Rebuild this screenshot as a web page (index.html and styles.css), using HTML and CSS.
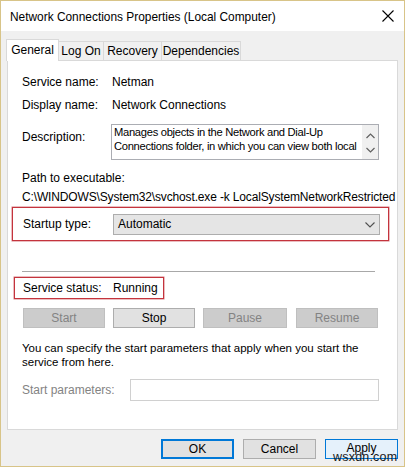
FILE: index.html
```html
<!DOCTYPE html>
<html>
<head>
<meta charset="utf-8">
<link rel="stylesheet" href="styles.css">
</head>
<body>
<div class="window">
  <div class="titlebar">
    <span class="title">Network Connections Properties (Local Computer)</span>
    <svg class="close" width="12" height="12" viewBox="0 0 12 12"><path d="M0.5 0.5 L11.5 11.5 M11.5 0.5 L0.5 11.5" stroke="#000" stroke-width="1.1" fill="none"/></svg>
  </div>
  <div class="client">
    <div class="tabs">
      <div class="tab active">General</div>
      <div class="tab t2">Log On</div>
      <div class="tab t3">Recovery</div>
      <div class="tab t4">Dependencies</div>
    </div>
    <div class="panel">
      <div class="row r1"><span class="lbl">Service name:</span><span>Netman</span></div>
      <div class="row r2"><span class="lbl">Display name:</span><span>Network Connections</span></div>
      <div class="desc">
        <span class="lbl dlbl">Description:</span>
        <div class="textbox">
          <div class="tbtext"><div class="tline">Manages objects in the Network and Dial-Up</div><div class="tline">Connections folder, in which you can view both local</div></div>
          <div class="scroll">
            <svg width="9" height="6" viewBox="0 0 9 6"><path d="M0.5 5 L4.5 1 L8.5 5" stroke="#606060" stroke-width="1.2" fill="none"/></svg>
            <svg width="9" height="6" viewBox="0 0 9 6"><path d="M0.5 1 L4.5 5 L8.5 1" stroke="#606060" stroke-width="1.2" fill="none"/></svg>
          </div>
        </div>
      </div>
      <div class="pathlbl">Path to executable:</div>
      <div class="path">C:\WINDOWS\System32\svchost.exe -k LocalSystemNetworkRestricted</div>
      <div class="redbox startup">
        <span class="lbl">Startup type:</span>
        <div class="combo"><span>Automatic</span>
          <svg width="10" height="6" viewBox="0 0 10 6"><path d="M0.5 0.5 L5 5 L9.5 0.5" stroke="#505050" stroke-width="1.1" fill="none"/></svg>
        </div>
      </div>
      <div class="sep"></div>
      <div class="redbox status"><span class="lbl">Service status:</span><span>Running</span></div>
      <div class="btnrow">
        <div class="btn dis">Start</div>
        <div class="btn">Stop</div>
        <div class="btn dis wide">Pause</div>
        <div class="btn dis">Resume</div>
      </div>
      <div class="info">You can specify the start parameters that apply when you start the service from here.</div>
      <div class="params"><span class="plbl">Start parameters:</span><div class="pinput"></div></div>
    </div>
    <div class="footer">
      <div class="fbtn ok">OK</div>
      <div class="fbtn">Cancel</div>
      <div class="fbtn apply"><span class="atext">Apply</span><span class="wm">wsxdn.com</span></div>
    </div>
  </div>
</div>
</body>
</html>
```
FILE: styles.css
```css
* { box-sizing: border-box; }
html, body { margin: 0; padding: 0; background: #ffffff; }
body { font-family: "Liberation Sans", Arial, sans-serif; font-size: 12px; color: #000; }
.window {
  width: 405px; height: 467px;
  border: 1px solid #d8c488;
  display: flex; flex-direction: column;
  background: #f0f0f0;
}
.titlebar {
  height: 30px; background: #fff; flex: none;
  display: flex; align-items: center; justify-content: space-between;
  padding: 0 9px 0 9px;
}
.title { font-size: 11.9px; position: relative; top: 1px; }
.close { margin-right: 1px; }
.client { flex: 1; display: flex; flex-direction: column; }
.tabs { display: flex; align-items: flex-end; padding-left: 5px; margin-top: 8px; height: 21px; flex: none; position: relative; z-index: 1; }
.tab {
  height: 19px; line-height: 18px; text-align: center; white-space: nowrap;
  border: 1px solid #d9d9d9; border-bottom: none; border-left: none;
  background: #f0f0f0; color: #000;
}
.tab.active {
  width: 53px; height: 22px; background: #fff; border-left: 1px solid #d9d9d9;
  line-height: 20px; margin-bottom: -1px;
}
.t2 { width: 45px; }
.t3 { width: 58px; }
.t4 { width: 79px; }
.panel {
  margin-left: 6px; width: 391px; height: 370px; flex: none;
  background: #fff; border: 1px solid #d9d9d9;
  padding: 0 0 0 14px;
  display: flex; flex-direction: column;
}
.row { display: flex; align-items: center; height: 15px; }
.lbl { width: 90px; flex: none; }
.r1 { margin-top: 13px; }
.r2 { margin-top: 8px; }
.desc { margin-top: 12px; height: 36px; display: flex; align-items: flex-start; }
.dlbl { padding-top: 6px; }
.textbox {
  width: 268px; height: 36px; margin-left: -1px;
  border: 1px solid #abadb3; background: #fff;
  display: flex;
}
.tbtext { flex: 1; min-width: 0; padding: 1px 0 0 2px; line-height: 13.5px; font-size: 11.2px; letter-spacing: -0.3px; }
.tline { white-space: nowrap; }
.scroll {
  width: 16px; flex: none; background: #f0f0f0; display: flex; flex-direction: column;
  align-items: center; justify-content: space-between; padding: 8px 0 6px;
}
.pathlbl { margin-top: 11px; line-height: 15px; }
.path { margin-top: 4px; line-height: 15px; white-space: nowrap; letter-spacing: -0.15px; }
.redbox { border: 1px solid #c4343d; box-shadow: 0 0 0 0.5px #d77a80; display: flex; align-items: center; flex: none; }
.startup {
  margin-top: 2px; margin-left: -10px; width: 377px; height: 34px; padding-left: 10px;
}
.combo {
  width: 267px; height: 21px; background: #e5e5e5; border: 1px solid #adadad;
  display: flex; align-items: center; justify-content: space-between; padding: 0 4px 0 4px;
}
.combo svg { margin-top: 1px; }
.sep { margin-top: 30px; height: 1px; background: #a8a8a8; width: 353px; flex: none; }
.status { margin-top: 5px; margin-left: -8px; width: 150px; height: 22px; padding-left: 8px; }
.btnrow { display: flex; margin-top: 9px; gap: 8px; padding-left: 1px; }
.btn {
  width: 82px; height: 20px; border: 1px solid #adadad; background: #e1e1e1;
  display: flex; align-items: center; justify-content: center;
}
.btn.wide { width: 84px; margin-right: 1px; }
.btn.dis { background: #cccccc; border-color: #bfbfbf; color: #838383; }
.info { margin-top: 13px; line-height: 14px; width: 372px; font-size: 11.5px; }
.params { display: flex; align-items: center; margin-top: 10px; }
.plbl { width: 108px; color: #838383; }
.pinput { width: 249px; height: 22px; border: 1px solid #d0d0d0; background: #fff; }
.footer { display: flex; gap: 9px; justify-content: flex-end; padding-right: 6px; margin-top: 9px; }
.fbtn {
  width: 73px; height: 20px; border: 1px solid #adadad; background: #e1e1e1;
  display: flex; align-items: center; justify-content: center; position: relative;
}
.fbtn.ok { border: 2px solid #0078d7; }
.fbtn.apply { background: #e5f1fb; border-color: #0078d7; }
.atext { position: relative; top: -1px; }
.wm {
  position: absolute; left: 7px; top: 10px; font-size: 12.5px; color: #1a1a1a;
  letter-spacing: 0.2px;
}
```
